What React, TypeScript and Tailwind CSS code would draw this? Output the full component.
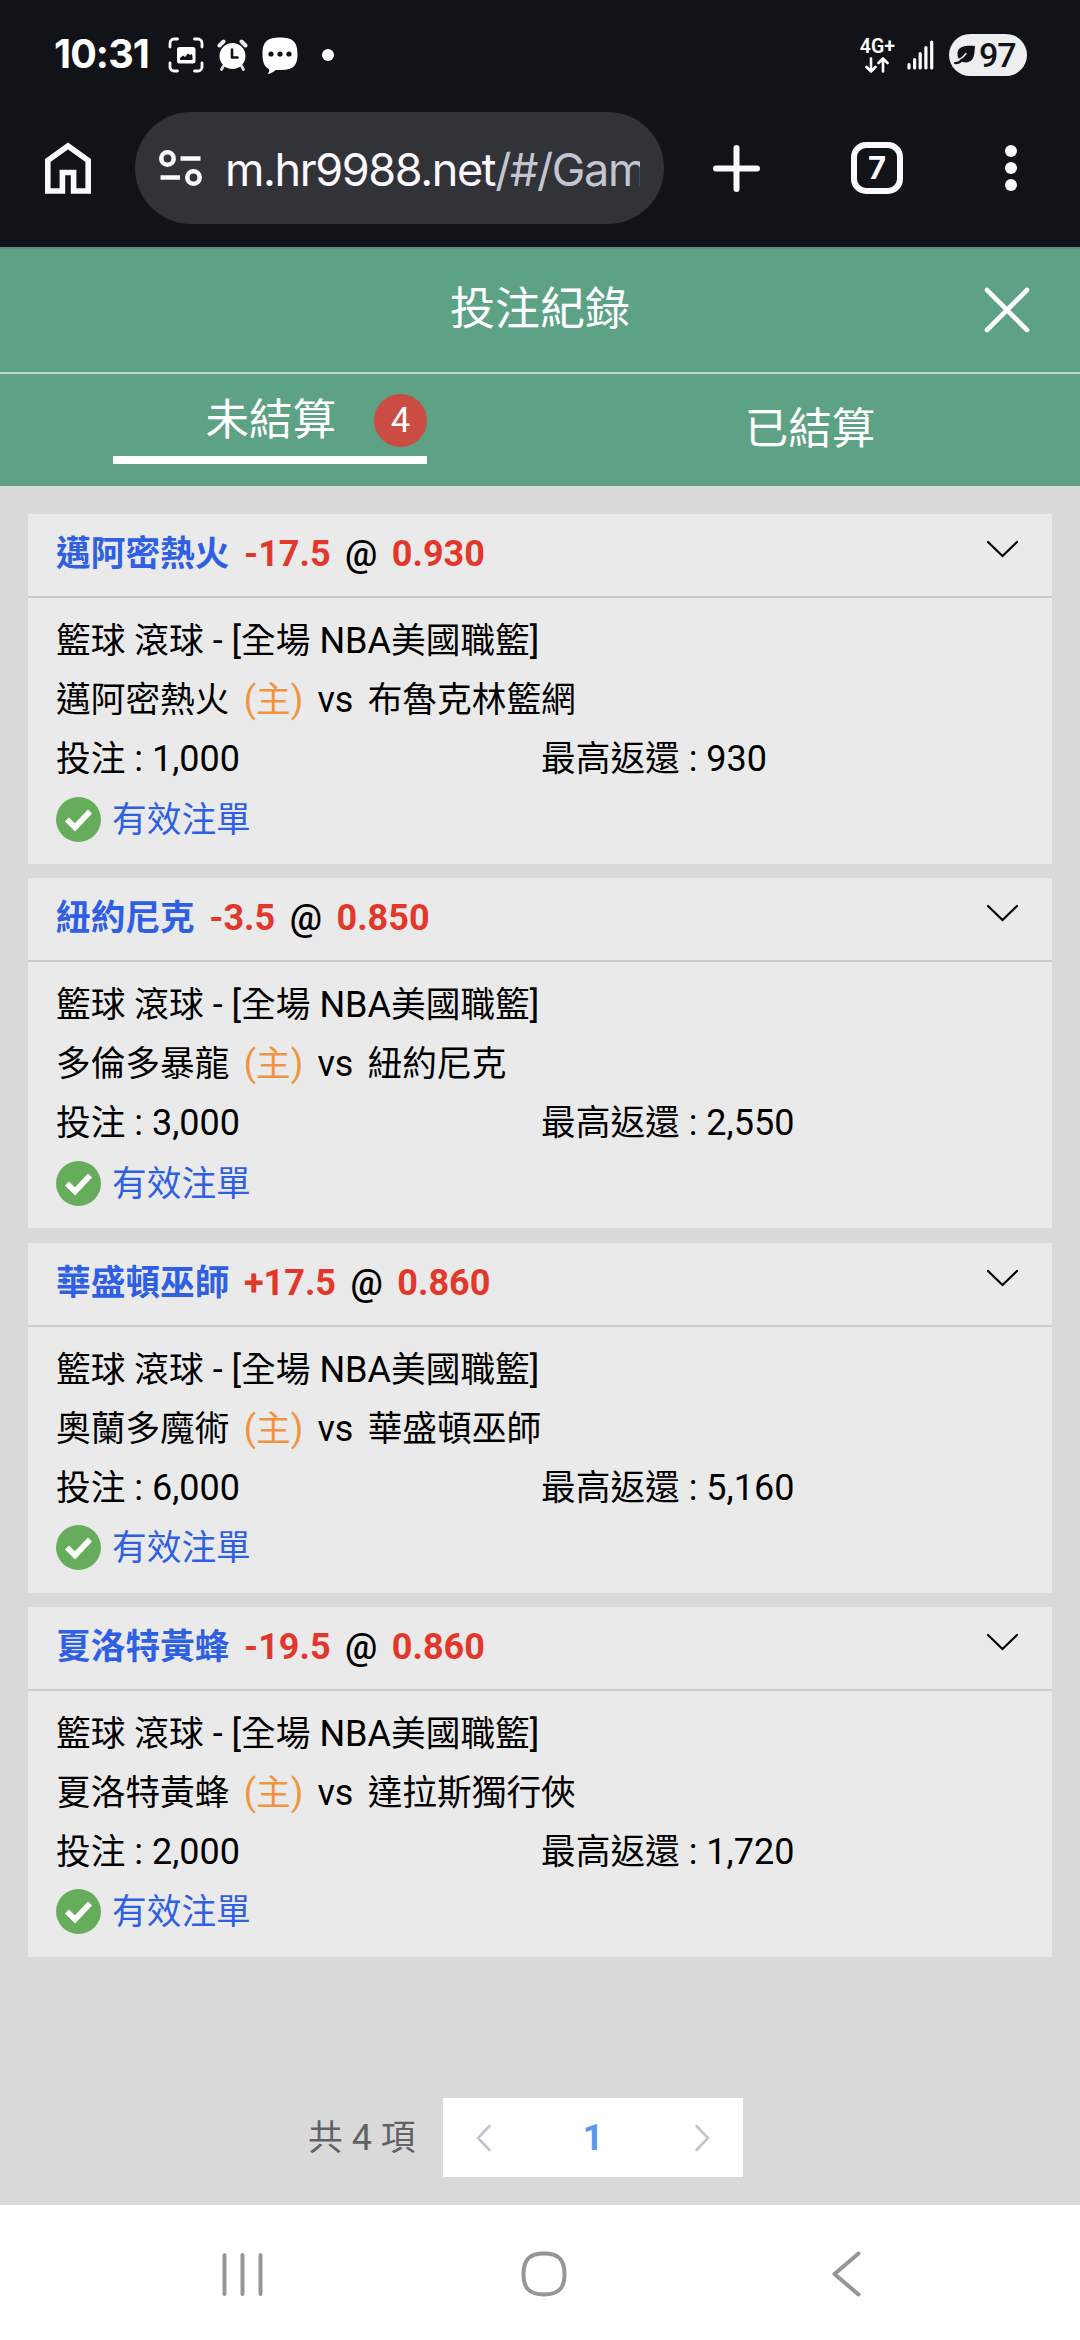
import React, { useState } from 'react';

const bets = [
  { team: '邁阿密熱火', line: '-17.5', odds: '0.930', home: '邁阿密熱火', away: '布魯克林籃網', stake: '1,000', payout: '930' },
  { team: '紐約尼克', line: '-3.5', odds: '0.850', home: '多倫多暴龍', away: '紐約尼克', stake: '3,000', payout: '2,550' },
  { team: '華盛頓巫師', line: '+17.5', odds: '0.860', home: '奧蘭多魔術', away: '華盛頓巫師', stake: '6,000', payout: '5,160' },
  { team: '夏洛特黃蜂', line: '-19.5', odds: '0.860', home: '夏洛特黃蜂', away: '達拉斯獨行俠', stake: '2,000', payout: '1,720' },
];

// latin runs are set a little larger than the chinese around them
const Mixed = ({ text }: { text: string }) => (
  <>
    {text.split(/([\x20-\x7e]+)/).map((part, index) =>
      index % 2 ? <span key={index} className="text-[36px] whitespace-pre">{part}</span> : part
    )}
  </>
);

const StatusBar = () => (
  <div className="flex h-[112px] justify-between pl-[54px] pr-[53px] text-white">
    <div className="flex h-[110px] items-center">
      <span className="w-[114px] font-['Inter'] text-[39.5px] font-bold tracking-[-0.9px]">10:31</span>
      <svg className="h-9 w-9" viewBox="0 0 36 36" fill="none">
        <path
          d="M2 10V6a4 4 0 0 1 4-4h3.500M26.500 2H30a4 4 0 0 1 4 4v4M34 26v4a4 4 0 0 1-4 4h-3.500M9.500 34H6a4 4 0 0 1-4-4v-4"
          stroke="currentColor"
          strokeWidth="2.800"
          strokeLinecap="round"
        />
        <rect x="9" y="10" width="18.500" height="16.500" rx="2.500" fill="currentColor" />
        <path d="M12 23v-2l3-2.500 2 1.500 3-3.500 2 1.500 1.500-1 1 2v4z" fill="#121318" />
      </svg>
      <svg className="ml-[13px] h-8 w-[31px]" viewBox="0 0 31 32" fill="none">
        <path d="M2.500 6.500 6.500 2.500M24.500 2.500l4 4" stroke="#eee" strokeWidth="4" strokeLinecap="round" />
        <path d="m6.500 27-2 3.500M24.500 27l2 3.500" stroke="#ddd" strokeWidth="2.800" strokeLinecap="round" />
        <circle cx="15.500" cy="17" r="13" fill="white" />
        <path d="M15 10.500v8h5.500" stroke="#121318" strokeWidth="2.600" strokeLinecap="round" strokeLinejoin="round" />
      </svg>
      <svg className="ml-[14px] h-[37px] w-[36px]" viewBox="0 0 36 37">
        <path
          d="M18 .5C30 .5 35.500 4 35.500 17S30 33 18 33h-4.500c-2 2-4.500 3.500-8 4 1.500-1.500 2-3 1.500-5C2 29.500.5 25 .5 17 .5 4 6 .5 18 .5Z"
          fill="currentColor"
        />
        <circle cx="9" cy="17" r="2.600" fill="#121318" />
        <circle cx="18" cy="17" r="2.600" fill="#121318" />
        <circle cx="27" cy="17" r="2.600" fill="#121318" />
      </svg>
      <span className="ml-[24px] h-3 w-3 rounded-full bg-white" />
    </div>

    <div className="flex h-[110px] items-center">
      <div className="flex flex-col items-center">
        <span className="font-['Roboto'] text-[19.5px] leading-[18px] font-semibold">4G+</span>
        <svg className="mt-px h-4 w-6" viewBox="0 0 24 16" fill="none" stroke="currentColor" strokeWidth="2.600" strokeLinecap="round" strokeLinejoin="round">
          <path d="M6 1.500v13M1.500 10 6 14.500 10.500 10M18 14.500v-13M13.500 6 18 1.500 22.500 6" />
        </svg>
      </div>
      <svg className="ml-[12px] h-[30px] w-[28px]" viewBox="0 0 28 30" stroke="currentColor" strokeWidth="3.200" strokeLinecap="round">
        <path d="M2 24.500V28M7.600 19.500V28M13.200 13.500V28M18.900 7.500V28M24.700 2V28" />
      </svg>
      <div className="ml-[14px] flex h-[42px] w-[78px] items-center rounded-full bg-[#eee] pl-[5px] text-[#121318]">
        <svg className="h-[20px] w-[21px]" viewBox="0 0 21 20" fill="none" strokeLinecap="round">
          <path d="M21 1C13 0 4 1 3.500 8c-.2 3 .8 5.500 2.500 8 5 2.500 10 1.500 12.500-2C20.700 10.500 20.500 5.500 21 1Z" fill="currentColor" />
          <path d="M5 14.500c2.500-1 5-3 7-6" stroke="#eee" strokeWidth="1.500" />
          <path d="M1 18c3 .5 5.500-1 7.500-3.500" stroke="currentColor" strokeWidth="2.200" />
        </svg>
        <span className="ml-[4px] font-['Roboto'] text-[34px] leading-none font-medium tracking-[-1px]">97</span>
      </div>
    </div>
  </div>
);

const AddressBar = () => (
  <div className="flex h-[135px] items-start pl-[45px] text-[#fbf8ff]">
    <svg className="mt-[30px] h-[52px] w-[46px]" viewBox="0 0 46 52" fill="none" stroke="currentColor" strokeWidth="5.600">
      <path d="M2.800 49V18.500L23 4l20.200 14.500V49H28.600V30.500H17.400V49Z" />
    </svg>
    <div className="ml-[44px] flex h-[112px] w-[529px] items-center rounded-full bg-[#323338] pl-[24px]">
      <svg className="h-[38px] w-[43px]" viewBox="0 0 43 38" fill="none" stroke="currentColor" strokeWidth="4.600">
        <circle cx="8.500" cy="9.500" r="6.200" />
        <path d="M21.500 9.500h20M1.500 28.500h19.500" />
        <circle cx="34.500" cy="28.500" r="6.200" />
      </svg>
      <div className="ml-[23px] w-[415px] overflow-hidden pt-[3px] font-['Inter'] text-[45px] whitespace-nowrap tracking-[-1.4px]">
        m.hr9988.net<span className="text-[#c4c5d0]">/#/Gam</span>
      </div>
    </div>
    <svg className="mt-[33px] ml-[49px] h-[47px] w-[47px]" viewBox="0 0 47 47" stroke="currentColor" strokeWidth="6" strokeLinecap="round">
      <path d="M23.500 3v41M3 23.500h41" />
    </svg>
    <div className="mt-[30px] ml-[91px] flex h-[52px] w-[52px] items-center justify-center rounded-[15px] border-[6px] border-current font-['Inter'] text-[31px] font-bold">
      7
    </div>
    <div className="mt-[33px] ml-[102px] flex flex-col gap-[5px]">
      <span className="h-3 w-3 rounded-full bg-current" />
      <span className="h-3 w-3 rounded-full bg-current" />
      <span className="h-3 w-3 rounded-full bg-current" />
    </div>
  </div>
);

const BetCard = ({ bet }: { bet: (typeof bets)[number] }) => (
  <div className="h-[350px] bg-[#eaeaea] text-[34.7px] text-black">
    <div className="flex h-[84px] justify-between border-b-2 border-[#cacaca] pr-[33px] pl-[28px]">
      <div className="flex h-[80px] items-center gap-[14.5px] font-bold text-[#e2382c]">
        <span className="text-[#2f5fe3]">{bet.team}</span>
        <span className="text-[36px]">{bet.line}</span>
        <span className="text-[36px] font-medium text-black">@</span>
        <span className="text-[36px]">{bet.odds}</span>
      </div>
      <svg className="mt-[26px] h-[18px] w-[33px]" viewBox="0 0 33 18" fill="none" stroke="currentColor" strokeWidth="2.200" strokeLinecap="round">
        <path d="M2 2 16.500 16 31 2" />
      </svg>
    </div>
    <div className="pt-[14px] pl-[28px] leading-[59px]">
      <p className="h-[59px]">
        <Mixed text="籃球 滾球 - [全場 NBA美國職籃]" />
      </p>
      <p className="flex h-[59px] gap-[14.2px]">
        <span>{bet.home}</span>
        <span className="text-[#ef9440]">
          <Mixed text="(主)" />
        </span>
        <span className="text-[36px]">vs</span>
        <span>{bet.away}</span>
      </p>
      <div className="grid h-[59px] grid-cols-[485px_1fr]">
        <span>
          <Mixed text={`投注 : ${bet.stake}`} />
        </span>
        <span>
          <Mixed text={`最高返還 : ${bet.payout}`} />
        </span>
      </div>
      <div className="flex h-[60px] items-center text-[#2f5fe3]">
        <svg className="h-[45px] w-[45px]" viewBox="0 0 45 45">
          <circle cx="22.500" cy="22.500" r="22.500" fill="#65ad5a" />
          <path d="m11 22.500 8 8L34 14.500" stroke="white" strokeWidth="5.600" fill="none" />
        </svg>
        <span className="ml-[11px] pt-[2px]">有效注單</span>
      </div>
    </div>
  </div>
);

const Pagination = () => (
  <div className="flex h-[79px] items-center pl-[308px] text-[34.7px] text-[#606266]">
    <span className="w-[135px]">
      <Mixed text="共 4 項" />
    </span>
    <div className="flex h-[79px] w-[300px] items-center justify-between bg-white px-[33px] text-[#c0c4cc]">
      <svg className="h-[28px] w-[15px]" viewBox="0 0 15 28" fill="none" stroke="currentColor" strokeWidth="2.600" strokeLinecap="round">
        <path d="M13.500 2 2 14l11.500 12" />
      </svg>
      <span className="text-[36px] font-bold text-[#5e98ea]">1</span>
      <svg className="h-[28px] w-[15px]" viewBox="0 0 15 28" fill="none" stroke="currentColor" strokeWidth="2.600" strokeLinecap="round">
        <path d="M1.500 2 13 14 1.500 26" />
      </svg>
    </div>
  </div>
);

const NavBar = () => (
  <div className="flex h-[135px] items-center bg-white pt-[3px] pl-[222px] text-[#969696]">
    <svg className="h-[46px] w-[42px]" viewBox="0 0 42 46" stroke="currentColor" strokeWidth="4" strokeLinecap="round">
      <path d="M2.500 4v39M20.500 4v39M38.500 4v39" />
    </svg>
    <svg className="ml-[257px] h-[46px] w-[46px]" viewBox="0 0 46 46" fill="none" stroke="currentColor" strokeWidth="4">
      <path d="M23 2.500C37.500 2.500 43.500 8.500 43.500 23S37.500 43.500 23 43.500 2.500 37.500 2.500 23 8.500 2.500 23 2.500Z" />
    </svg>
    <svg className="ml-[265px] h-[46px] w-[29px]" viewBox="0 0 29 46" fill="none" stroke="currentColor" strokeWidth="4" strokeLinecap="round" strokeLinejoin="round">
      <path d="M26.500 2.500 2.500 23l24 20.500" />
    </svg>
  </div>
);

export default function App() {
  const [settled, setSettled] = useState(false);

  return (
    <div className="flex h-[2340px] w-[1080px] flex-col overflow-hidden bg-[#d9d9d9] font-['Roboto','Noto_Sans_CJK_TC',sans-serif]">
      <header className="h-[247px] bg-[#121318]">
        <StatusBar />
        <AddressBar />
      </header>

      <div className="bg-[#5ea285] text-white">
        <div className="grid h-[127px] grid-cols-[1fr_180px_1fr] items-center border-t-2 border-b-2 border-t-[#70897f] border-b-[#bcd6ca] pb-[2px]">
          <h1 className="col-start-2 text-center text-[45px] leading-none whitespace-nowrap">投注紀錄</h1>
          <svg className="mr-[50px] h-[46px] w-[46px] justify-self-end" viewBox="0 0 46 46" stroke="currentColor" strokeWidth="4.600" strokeLinecap="round">
            <path d="m3 3 40 40M43 3 3 43" />
          </svg>
        </div>
        <div className="grid h-[112px] grid-cols-2 text-[43.5px]">
          <button onClick={() => setSettled(false)} className="flex justify-center">
            <span
              className={`mt-[12px] flex h-[78px] w-[314px] justify-end border-b-8 ${settled ? 'border-transparent' : 'border-white'}`}
            >
              <span className="mr-[38px] leading-[69px]">未結算</span>
              <span className="mt-[8px] flex h-[53px] w-[53px] items-center justify-center rounded-full bg-[#cb4c42] text-[34.7px]">4</span>
            </span>
          </button>
          <button onClick={() => setSettled(true)} className="leading-[108px]">已結算</button>
        </div>
      </div>

      <main className="flex flex-1 flex-col">
        <div className="flex flex-col gap-[14.3px] px-[28px] pt-[28px]">
          {bets.map((bet, index) => (
            <BetCard key={index} bet={bet} />
          ))}
        </div>
        <div className="mt-auto pb-[28px]">
          <Pagination />
        </div>
      </main>

      <NavBar />
    </div>
  );
}
